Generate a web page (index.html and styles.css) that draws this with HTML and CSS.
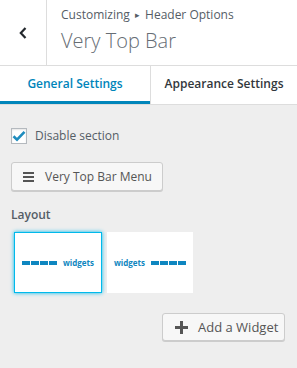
FILE: index.html
```html
<!DOCTYPE html>
<html>
<head>
<meta charset="utf-8">
<link rel="stylesheet" href="styles.css">
</head>
<body>
<div class="panel">
  <header class="head">
    <button class="back" aria-label="Back">
      <svg width="8" height="12" viewBox="0 0 8 12"><path d="M6.5 1 L1.8 6 L6.5 11" fill="none" stroke="#23282d" stroke-width="2.2"/></svg>
    </button>
    <div class="titles">
      <div class="crumb">Customizing <span class="tri">▸</span> Header Options</div>
      <h1 class="title">Very Top Bar</h1>
    </div>
  </header>
  <nav class="tabs">
    <div class="tab active">General Settings</div>
    <div class="tab">Appearance Settings</div>
  </nav>
  <main class="body">
    <label class="check">
      <span class="box">
        <svg width="14" height="12" viewBox="0 0 14 12"><path d="M1.5 6.2 L5 9.6 L12.5 1.8" fill="none" stroke="#1e8cbe" stroke-width="2.6"/></svg>
      </span>
      <span>Disable section</span>
    </label>
    <button class="btn menu-btn">
      <svg width="11" height="10" viewBox="0 0 11 10"><rect x="0" y="0" width="11" height="2" fill="#555"/><rect x="0" y="4" width="11" height="2" fill="#555"/><rect x="0" y="8" width="11" height="2" fill="#555"/></svg>
      <span>Very Top Bar Menu</span>
    </button>
    <div class="label">Layout</div>
    <div class="layouts">
      <div class="opt selected">
        <span class="dashes"><i></i><i></i><i></i><i></i></span>
        <span class="wtext">widgets</span>
      </div>
      <div class="opt">
        <span class="wtext">widgets</span>
        <span class="dashes"><i></i><i></i><i></i><i></i></span>
      </div>
    </div>
    <div class="actions">
      <button class="btn add-btn">
        <svg width="13" height="13" viewBox="0 0 13 13"><rect x="5" y="0" width="3" height="13" fill="#555"/><rect x="0" y="5" width="13" height="3" fill="#555"/></svg>
        <span>Add a Widget</span>
      </button>
    </div>
  </main>
</div>
</body>
</html>
```
FILE: styles.css
```css
* { box-sizing: border-box; }
html, body { margin: 0; padding: 0; }
body {
  background: #eee;
  font-family: "Open Sans", "Liberation Sans", sans-serif;
  color: #555d66;
  width: 297px;
  height: 368px;
  overflow: hidden;
}
.head {
  display: flex;
  height: 66px;
  background: #fff;
  border-bottom: 1px solid #ddd;
}
.back {
  width: 47px;
  border: 0;
  border-right: 1px solid #ddd;
  background: #fff;
  display: flex;
  align-items: center;
  justify-content: center;
  padding: 0 0 0 0;
}
.titles {
  padding: 7px 0 0 14px;
}
.crumb {
  font-size: 12px;
  line-height: 16px;
  color: #555d66;
}
.tri { font-size: 9px; position: relative; top: -1px; margin: 0 2px; }
.title {
  margin: 4px 0 0 0;
  font-size: 20px;
  font-weight: 300;
  line-height: 26px;
  color: #666d74;
}
.tabs {
  display: flex;
  background: #fff;
  height: 39px;
  border-bottom: 1px solid #ddd;
}
.tab {
  flex: 0 0 150px;
  text-align: center;
  font-size: 12px;
  font-weight: 600;
  line-height: 36px;
  color: #32373c;
}
.tab + .tab { flex: 1; border-left: 1px solid #ddd; }
.tab.active {
  color: #0085ba;
  border-bottom: 3px solid #0085ba;
}
.body {
  padding: 22px 12px 0 11px;
}
.check {
  display: flex;
  align-items: center;
  gap: 8px;
  font-size: 12px;
  color: #555d66;
}
.box {
  width: 16px;
  height: 16px;
  border: 1px solid #b4b9be;
  background: #fff;
  display: flex;
  align-items: center;
  justify-content: center;
  box-shadow: inset 0 1px 2px rgba(0,0,0,0.1);
}
.btn {
  display: inline-flex;
  align-items: center;
  font-family: inherit;
  font-size: 12px;
  color: #555;
  background: #f7f7f7;
  border: 1px solid #ccc;
  border-radius: 3px;
  box-shadow: 0 1px 0 #ccc;
  padding: 0;
}
.menu-btn {
  margin-top: 18px;
  width: 152px;
  height: 29px;
  padding-left: 11px;
  gap: 11px;
}
.label {
  margin-top: 16px;
  font-size: 12px;
  font-weight: 600;
  color: #555d66;
  line-height: 16px;
}
.layouts {
  display: flex;
  gap: 5px;
  margin-top: 9px;
  padding-left: 3px;
}
.opt {
  width: 86px;
  height: 61px;
  background: #fff;
  display: flex;
  align-items: center;
  justify-content: center;
  gap: 6px;
}
.opt.selected {
  width: 88px;
  border: 1px solid #00b9eb;
  box-shadow: 0 0 4px #00b9eb;
}
.dashes { display: flex; gap: 1px; }
.dashes i { display: block; width: 8px; height: 4px; background: #0e86c0; }
.wtext {
  font-size: 8px;
  font-weight: 700;
  color: #0e86c0;
  line-height: 9px;
}
.actions {
  display: flex;
  justify-content: flex-end;
  margin-top: 20px;
}
.add-btn {
  width: 123px;
  height: 28px;
  padding-left: 12px;
  gap: 10px;
  font-size: 13px;
}
```
